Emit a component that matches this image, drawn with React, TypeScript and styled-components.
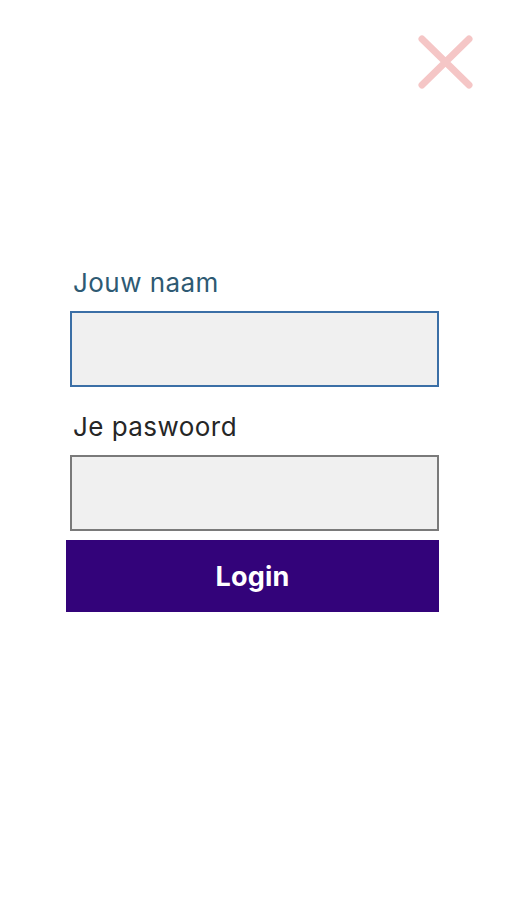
import React from 'react';
import styled, { createGlobalStyle } from 'styled-components';

const GlobalStyle = createGlobalStyle`
  html, body {
    margin: 0;
    padding: 0;
    background: #ffffff;
  }
  body {
    font-family: Inter, "Noto Sans", sans-serif;
  }
`;

const Screen = styled.div`
  width: 507px;
  height: 900px;
  display: flex;
  flex-direction: column;
  box-sizing: border-box;
`;

const TopBar = styled.div`
  display: flex;
  justify-content: flex-end;
  padding: 34px 33px 0 0;
`;

const CloseButton = styled.button`
  width: 56px;
  height: 56px;
  padding: 0;
  border: none;
  background: transparent;
  cursor: pointer;
  display: flex;
  align-items: center;
  justify-content: center;
`;

const Form = styled.form`
  margin: 177px 0 0 66px;
  width: 373px;
  display: flex;
  flex-direction: column;
`;

const Label = styled.label<{ $active?: boolean }>`
  display: block;
  padding-left: 7px;
  font-size: 26px;
  line-height: 32px;
  font-weight: 400;
  letter-spacing: 0.45px;
  color: ${(p) => (p.$active ? '#2e5a73' : '#262626')};
  margin-bottom: 12px;
`;

const Input = styled.input<{ $active?: boolean }>`
  display: block;
  margin-left: 4px;
  width: 369px;
  height: 76px;
  box-sizing: border-box;
  background: #f0f0f0;
  border: 2px solid ${(p) => (p.$active ? '#3b6fa6' : '#7a7a7a')};
  outline: none;
  font-family: inherit;
  font-size: 22px;
  padding: 0 12px;
`;

const Field = styled.div`
  display: flex;
  flex-direction: column;
  margin-bottom: 24px;

  &:last-of-type {
    margin-bottom: 9px;
  }
`;

const Submit = styled.button`
  width: 373px;
  height: 72px;
  border: none;
  background: #33037a;
  color: #ffffff;
  font-family: Inter, "Noto Sans", sans-serif;
  font-size: 27px;
  font-weight: 700;
  letter-spacing: 0.2px;
  cursor: pointer;
`;

const App: React.FC = () => {
  return (
    <>
      <GlobalStyle />
      <Screen>
        <TopBar>
          <CloseButton type="button" aria-label="Sluiten">
            <svg width="56" height="56" viewBox="0 0 56 56">
              <path
                d="M4 5 L51 51 M51 5 L4 51"
                stroke="#f5c6c6"
                strokeWidth="7"
                strokeLinecap="round"
                fill="none"
              />
            </svg>
          </CloseButton>
        </TopBar>
        <Form onSubmit={(e) => e.preventDefault()}>
          <Field>
            <Label $active htmlFor="naam">Jouw naam</Label>
            <Input $active id="naam" type="text" />
          </Field>
          <Field>
            <Label htmlFor="wachtwoord">Je paswoord</Label>
            <Input id="wachtwoord" type="password" />
          </Field>
          <Submit type="submit">Login</Submit>
        </Form>
      </Screen>
    </>
  );
};

export default App;
